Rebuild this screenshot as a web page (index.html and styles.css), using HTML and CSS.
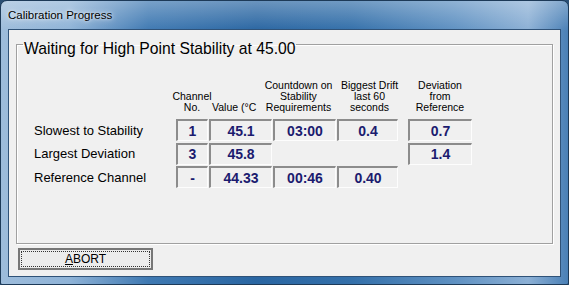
FILE: index.html
```html
<!DOCTYPE html>
<html lang="en">
<head>
  <meta charset="UTF-8" />
  <title>Calibration Progress</title>
  <link rel="stylesheet" href="styles.css">
</head>
<body>
  <div class="window">
    <div class="titlebar">Calibration Progress</div>
    <div class="client">
      <fieldset class="group">
        <legend>Waiting for High Point Stability at 45.00</legend>
        <div class="grid">
          <div></div>
          <div class="head"><div>Channel<br>No.</div></div>
          <div class="head head-left"><div>Value (°C</div></div>
          <div class="head head-count"><div>Countdown on<br>Stability<br>Requirements</div></div>
          <div class="head head-drift"><div>Biggest Drift<br>last 60<br>seconds</div></div>
          <div></div>
          <div class="head"><div>Deviation<br>from<br>Reference</div></div>

          <div class="label">Slowest to Stability</div>
          <div class="cell">1</div>
          <div class="cell">45.1</div>
          <div class="cell">03:00</div>
          <div class="cell">0.4</div>
          <div></div>
          <div class="cell">0.7</div>

          <div class="label">Largest Deviation</div>
          <div class="cell">3</div>
          <div class="cell">45.8</div>
          <div></div>
          <div></div>
          <div></div>
          <div class="cell">1.4</div>

          <div class="label">Reference Channel</div>
          <div class="cell">-</div>
          <div class="cell">44.33</div>
          <div class="cell">00:46</div>
          <div class="cell">0.40</div>
        </div>
      </fieldset>
      <button class="abort"><span><u>A</u>BORT</span></button>
    </div>
  </div>
</body>
</html>
```

FILE: styles.css
```css
body {
  margin: 0;
  background: #2a4f74;
  font-family: 'Liberation Sans', Arial, sans-serif;
}

.window {
  width: 569px;
  height: 285px;
  box-sizing: border-box;
  border: 1px solid #1d3a58;
  border-radius: 7px 7px 2px 2px;
  padding: 0 7px 7px 7px;
  background:
    linear-gradient(to bottom, rgba(255,255,255,0.3), rgba(255,255,255,0) 30px),
    linear-gradient(to right, #9dbcdb 0%, #8fb3d7 12%, #3f79b2 26%, #2a66a2 45%, #3470aa 62%, #5f91c2 80%, #8cb0d5 93%, #4a80b6 100%);
  display: flex;
  flex-direction: column;
}

.titlebar {
  height: 28px;
  display: flex;
  align-items: center;
  font-size: 11.5px;
  color: #000;
  text-shadow: 0 0 6px rgba(255,255,255,0.9), 0 0 3px rgba(255,255,255,0.7);
}

.client {
  flex: 1;
  border: 1px solid #2f5278;
  background: #f0f0f0;
  display: flex;
  flex-direction: column;
  align-items: flex-start;
}

.group {
  margin: 2px 0 0 7px;
  padding: 0;
  width: 537px;
  height: 212px;
  box-sizing: border-box;
  border: 1px solid #a0a0a0;
  box-shadow: inset 1px 1px 0 #fff, 1px 1px 0 #fff;
  min-width: 0;
}

.group legend {
  margin-left: 6px;
  padding: 9px 1px 0 1px;
  font-size: 15.7px;
  line-height: 16px;
  color: #000;
}

.grid {
  margin: 23px 0 0 17px;
  display: grid;
  grid-template-columns: 141px 32px 63px 63px 61px 8px 64px;
  column-gap: 1px;
  row-gap: 1.5px;
}

.head {
  display: flex;
  justify-content: center;
  align-items: flex-end;
  padding-bottom: 4.5px;
  font-size: 10.5px;
  line-height: 11px;
  color: #000;
}

.head div {
  text-align: center;
  white-space: nowrap;
}

.head-left {
  justify-content: flex-start;
  padding-left: 3px;
}

.head-count {
  padding-right: 12px;
}

.head-drift {
  padding-left: 4px;
}

.label {
  display: flex;
  align-items: center;
  font-size: 13px;
  color: #000;
}

.cell {
  height: 22px;
  box-sizing: border-box;
  border-top: 2px solid #8c8c8c;
  border-left: 2px solid #8c8c8c;
  border-right: 1px solid #fdfdfd;
  border-bottom: 1px solid #fdfdfd;
  display: flex;
  align-items: center;
  justify-content: center;
  font-size: 14px;
  font-weight: bold;
  color: #1b1b6f;
}

.abort {
  margin: 4px 0 0 9px;
  width: 135px;
  height: 22px;
  padding: 1px;
  box-sizing: border-box;
  border: 2px solid #777;
  background: #ececec;
  font-family: 'Liberation Sans', Arial, sans-serif;
  font-size: 12px;
  color: #000;
  display: flex;
}

.abort span {
  flex: 1;
  border: 1px dotted #333;
  display: flex;
  align-items: center;
  justify-content: center;
}
```
